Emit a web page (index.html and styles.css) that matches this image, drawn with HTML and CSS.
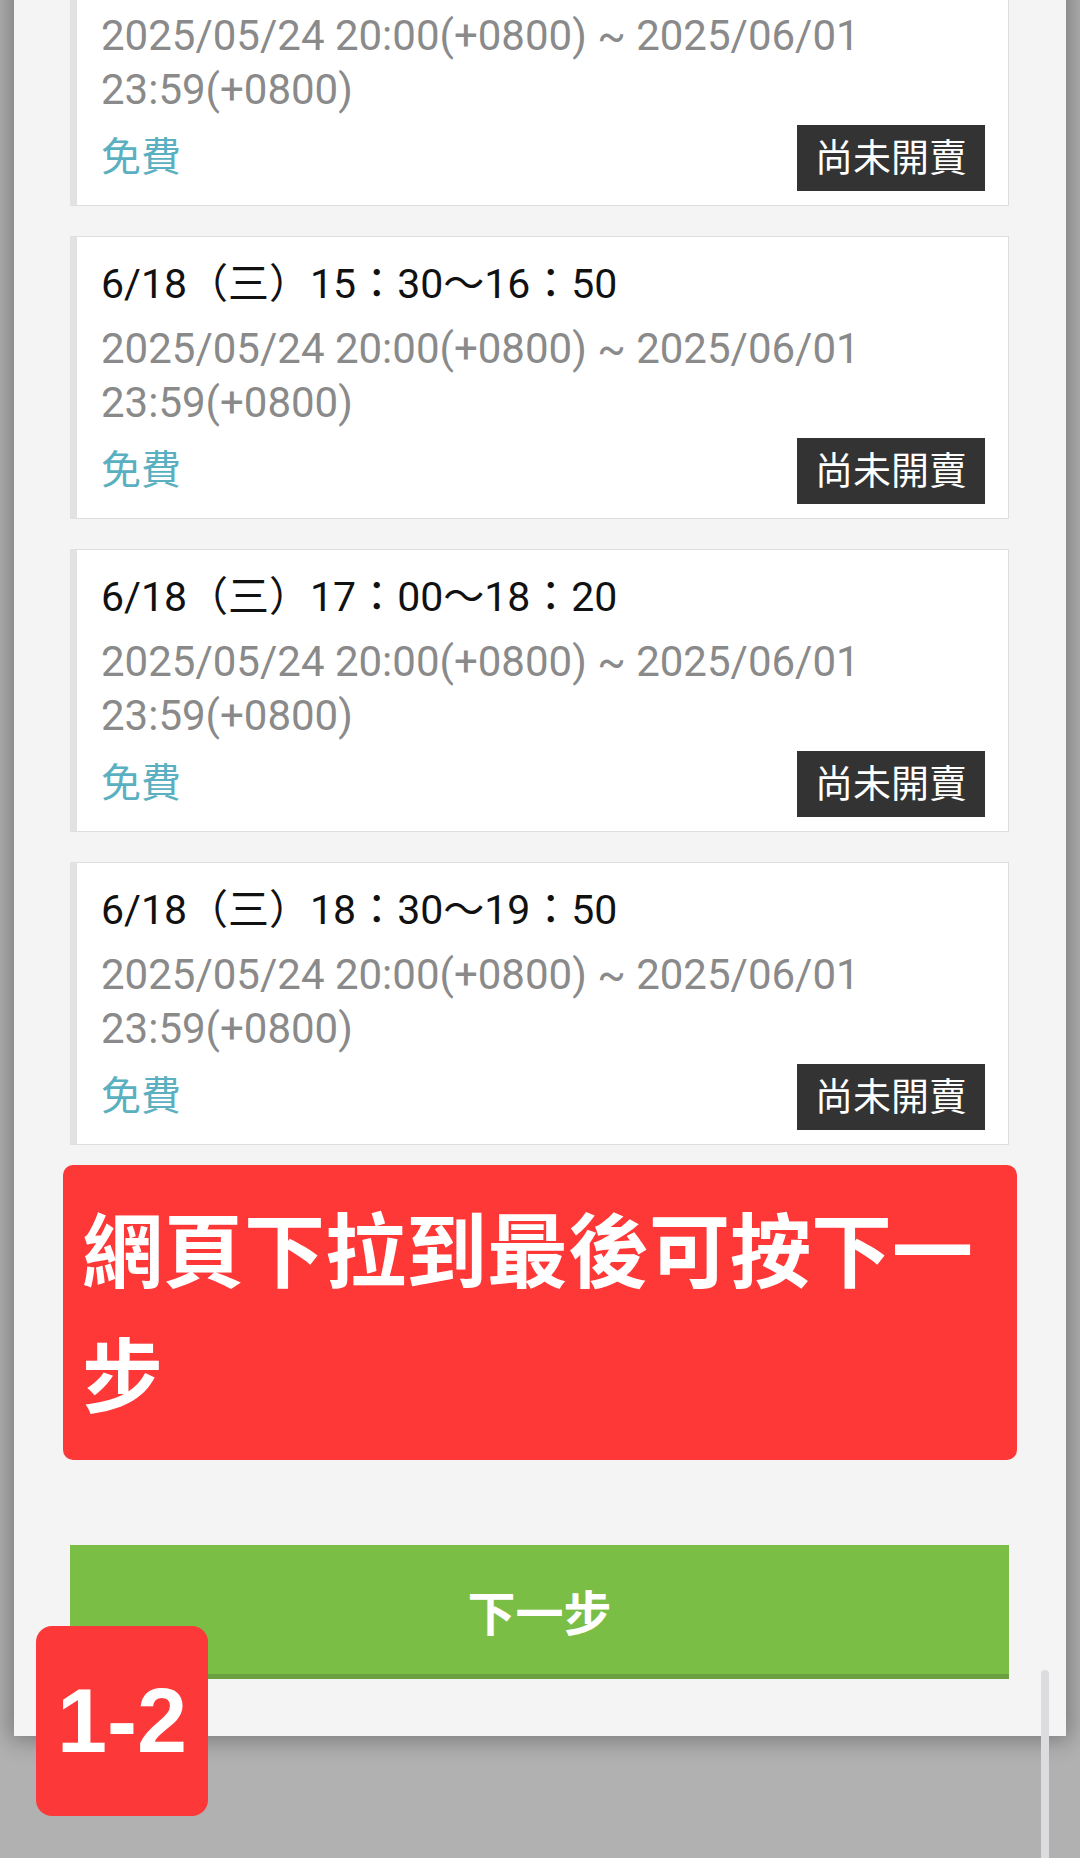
FILE: index.html
```html
<!DOCTYPE html>
<html lang="zh-Hant">
<head>
    <meta charset="UTF-8">
    <title>選擇場次</title>
    <link rel="stylesheet" href="styles.css">
</head>

<body>
    <div class="screen">
        <div class="panel">
            <div class="session-list">
                <div class="session">
                    <h3 class="session-title">6/18（三）14：00～15：20</h3>
                    <p class="session-date">2025/05/24 20:00(+0800) ~ 2025/06/01 23:59(+0800)</p>
                    <div class="session-foot">
                        <span class="session-price">免費</span>
                        <span class="session-status">尚未開賣</span>
                    </div>
                </div>

                <div class="session">
                    <h3 class="session-title">6/18（三）15：30～16：50</h3>
                    <p class="session-date">2025/05/24 20:00(+0800) ~ 2025/06/01 23:59(+0800)</p>
                    <div class="session-foot">
                        <span class="session-price">免費</span>
                        <span class="session-status">尚未開賣</span>
                    </div>
                </div>

                <div class="session">
                    <h3 class="session-title">6/18（三）17：00～18：20</h3>
                    <p class="session-date">2025/05/24 20:00(+0800) ~ 2025/06/01 23:59(+0800)</p>
                    <div class="session-foot">
                        <span class="session-price">免費</span>
                        <span class="session-status">尚未開賣</span>
                    </div>
                </div>

                <div class="session">
                    <h3 class="session-title">6/18（三）18：30～19：50</h3>
                    <p class="session-date">2025/05/24 20:00(+0800) ~ 2025/06/01 23:59(+0800)</p>
                    <div class="session-foot">
                        <span class="session-price">免費</span>
                        <span class="session-status">尚未開賣</span>
                    </div>
                </div>
            </div>

            <div class="notice">網頁下拉到最後可按下一步</div>

            <div class="actions">
                <button class="btn-next">下一步</button>
            </div>
        </div>

        <div class="step-tag">1-2</div>
        <div class="scroll-thumb"></div>
    </div>
</body>
</html>
```

FILE: styles.css
```css
body {
    margin: 0;
    font-family: Roboto, "Noto Sans CJK TC", sans-serif;
    background-color: #b1b1b1;
}

.screen {
    position: relative;
    height: 1858px;
    padding: 0 14px;
    overflow: hidden;
    background-color: #b1b1b1;
}

.panel {
    background-color: #f4f4f4;
    padding: 0 57px 57px 56px;
    box-shadow: 0 0 22px 4px rgba(0, 0, 0, 0.32);
}

.session-list {
    margin-top: -77px;
    display: flex;
    flex-direction: column;
    gap: 30px;
}

.session {
    background-color: #fff;
    border: 1px solid #dedede;
    border-left: 7px solid #e2e2e2;
    padding: 20px 23px 14px 24px;
}

.session-title {
    margin: 0;
    font-size: 41px;
    font-weight: 400;
    line-height: 54px;
    color: #111;
}

.session-date {
    margin: 11px 0 0;
    font-size: 42px;
    line-height: 54px;
    color: #8a8a8a;
}

.session-foot {
    margin-top: 8px;
    display: flex;
    justify-content: space-between;
    align-items: center;
}

.session-price {
    margin-bottom: 8px;
    font-size: 40px;
    color: #5aafc0;
}

.session-status {
    background-color: #333;
    color: #fff;
    font-size: 38px;
    line-height: 50px;
    padding: 8px 18px;
}

.notice {
    margin: 20px -8px 0 -7px;
    padding: 18px 16px 27px 19px;
    background-color: #fe3737;
    border-radius: 10px;
    color: #fff;
    font-family: "Noto Sans CJK TC", sans-serif;
    font-weight: 700;
    font-size: 81px;
    line-height: 125px;
}

.actions {
    margin-top: 85px;
}

.btn-next {
    display: block;
    width: 100%;
    height: 134px;
    border: none;
    border-bottom: 5px solid #6c9f40;
    background-color: #7bbe45;
    color: #fff;
    font-family: "Noto Sans CJK TC", sans-serif;
    font-weight: 700;
    font-size: 48px;
    cursor: pointer;
}

.step-tag {
    position: absolute;
    left: 36px;
    top: 1626px;
    width: 172px;
    height: 190px;
    display: flex;
    align-items: center;
    justify-content: center;
    background-color: #fd3838;
    border-radius: 16px;
    color: #fff;
    font-family: "Liberation Sans", Arial, sans-serif;
    font-weight: 700;
    font-size: 90px;
}

.scroll-thumb {
    position: absolute;
    left: 1041px;
    top: 1670px;
    width: 8px;
    height: 200px;
    border-radius: 4px 4px 0 0;
    background-color: #dcdcdf;
}
```
